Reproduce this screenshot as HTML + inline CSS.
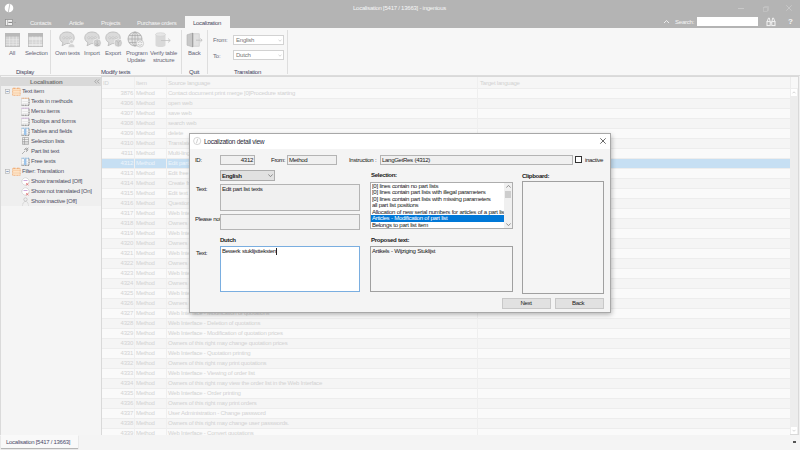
<!DOCTYPE html>
<html><head><meta charset="utf-8">
<style>
*{box-sizing:border-box;margin:0;padding:0}
html,body{width:800px;height:450px;overflow:hidden;background:#f0f0f0}
body{position:relative;font-family:"Liberation Sans",sans-serif;font-size:6px;letter-spacing:-0.22px;line-height:1;color:#333}
.a{position:absolute}
.t{position:absolute;white-space:pre;line-height:8px;height:8px}
svg{position:absolute;overflow:visible}
.b{font-weight:bold}
</style></head><body>

<div class="a" style="left:0px;top:0px;width:800px;height:28px;background:#b4b4b4"></div>
<svg style="left:4px;top:3px" width="10" height="10" viewBox="0 0 10 10"><circle cx="5" cy="5" r="4.3" fill="#fff"/><path d="M5.9 0.8 L4.3 9.2" stroke="#b4b4b4" stroke-width="0.8"/></svg>
<div class="t" style="left:353px;top:3.5px;color:#f6f6f6;letter-spacing:-0.25px">Localisation [5417 / 13663] - ingenious</div>
<div class="a" style="left:738px;top:8px;width:6px;height:1px;background:#c8c8c8"></div>
<svg style="left:763px;top:5.5px" width="7" height="6"><rect x="0.5" y="1.5" width="4" height="4" fill="none" stroke="#c8c8c8" stroke-width="0.6"/><path d="M1.5 1.5 V0.5 H5.5 V4.5 H4.5" fill="none" stroke="#c8c8c8" stroke-width="0.6"/></svg>
<svg style="left:786px;top:5px" width="6" height="6"><path d="M0.3 0.3 L5.7 5.7 M5.7 0.3 L0.3 5.7" stroke="#d0d0d0" stroke-width="0.7"/></svg>
<svg style="left:5px;top:19px" width="12" height="7"><rect x="0.5" y="0.5" width="7" height="6" fill="#f0f0f0" stroke="#8c8c8c" stroke-width="0.7"/><path d="M2.6 0.5 V6.5" stroke="#9a9a9a" stroke-width="0.6"/><path d="M3.4 3.4 H7" stroke="#707070" stroke-width="0.9"/><path d="M9.6 3.5 h1" stroke="#909090" stroke-width="0.6"/></svg>
<div class="t" style="left:30px;top:18.5px;color:#f4f4f4;letter-spacing:-0.3px">Contacts</div>
<div class="t" style="left:69px;top:18.5px;color:#f4f4f4;letter-spacing:-0.3px">Article</div>
<div class="t" style="left:101px;top:18.5px;color:#f4f4f4;letter-spacing:-0.3px">Projects</div>
<div class="t" style="left:137px;top:18.5px;color:#f4f4f4;letter-spacing:-0.3px">Purchase orders</div>
<div class="a" style="left:185px;top:16px;width:45px;height:12px;background:#f7f7f7"></div>
<div class="t" style="left:193px;top:18.5px;color:#4a4a60;letter-spacing:-0.3px">Localization</div>
<svg style="left:663px;top:19px" width="7" height="5"><path d="M1 4 L3.5 1.5 L6 4" fill="none" stroke="#f4f4f4" stroke-width="0.9"/></svg>
<div class="t" style="left:675px;top:17.5px;color:#f4f4f4;">Search:</div>
<div class="a" style="left:697px;top:17px;width:61px;height:9px;background:#fff"></div>
<svg style="left:766px;top:17px" width="10" height="10"><path d="M1.2 4.5 L2.5 1 H3.3 L4.1 4.5 M5.9 4.5 L6.7 1 H7.5 L8.8 4.5" fill="none" stroke="#f4f4f4" stroke-width="0.9"/><rect x="1" y="4.6" width="3.2" height="4" fill="none" stroke="#f4f4f4" stroke-width="1"/><rect x="5.8" y="4.6" width="3.2" height="4" fill="none" stroke="#f4f4f4" stroke-width="1"/><path d="M4.2 5.6 H5.8" stroke="#f4f4f4" stroke-width="0.8"/></svg>
<div class="t" style="left:788px;top:18px;color:#f4f4f4;font-size:8px;font-weight:bold">?</div>
<div class="a" style="left:0px;top:28px;width:800px;height:48px;background:#f7f7f7"></div>
<div class="a" style="left:0px;top:75px;width:800px;height:1px;background:#dcdcdc"></div>
<div class="a" style="left:50px;top:30px;width:1px;height:44px;background:#dedede"></div>
<div class="a" style="left:181px;top:30px;width:1px;height:44px;background:#dedede"></div>
<div class="a" style="left:207px;top:30px;width:1px;height:44px;background:#dedede"></div>
<div class="a" style="left:287px;top:30px;width:1px;height:44px;background:#dedede"></div>
<svg style="left:5px;top:33px" width="15" height="14" viewBox="0 0 15 14"><rect x="0.4" y="0.4" width="14.2" height="13.2" fill="#d2d2d2" stroke="#b8b8b8" stroke-width="0.8"/><rect x="0" y="0" width="15" height="3.6" fill="#b9b9b9"/><path d="M0.8 6.8 H14.2" stroke="#ececec" stroke-width="0.6"/><path d="M0.8 9.2 H14.2" stroke="#ececec" stroke-width="0.6"/><path d="M0.8 11.6 H14.2" stroke="#ececec" stroke-width="0.6"/><path d="M4.6 3.6 V13.2" stroke="#ececec" stroke-width="0.6"/><path d="M8 3.6 V13.2" stroke="#ececec" stroke-width="0.6"/><path d="M11.4 3.6 V13.2" stroke="#ececec" stroke-width="0.6"/></svg>
<svg style="left:28px;top:33px" width="15" height="14" viewBox="0 0 15 14"><rect x="0.4" y="0.4" width="14.2" height="13.2" fill="#d2d2d2" stroke="#b8b8b8" stroke-width="0.8"/><rect x="0" y="0" width="15" height="3.6" fill="#b9b9b9"/><rect x="0.8" y="4.2" width="13.4" height="2.4" fill="#e4e4e4"/><rect x="0.8" y="10.8" width="13.4" height="2.2" fill="#e4e4e4"/><path d="M0.8 6.8 H14.2" stroke="#ececec" stroke-width="0.6"/><path d="M0.8 9.2 H14.2" stroke="#ececec" stroke-width="0.6"/><path d="M0.8 11.6 H14.2" stroke="#ececec" stroke-width="0.6"/><path d="M4.6 3.6 V13.2" stroke="#ececec" stroke-width="0.6"/><path d="M8 3.6 V13.2" stroke="#ececec" stroke-width="0.6"/><path d="M11.4 3.6 V13.2" stroke="#ececec" stroke-width="0.6"/></svg>
<div class="t" style="left:9px;top:49px;color:#6a6a7a;">All</div>
<div class="t" style="left:25px;top:49px;color:#6a6a7a;">Selection</div>
<div class="t" style="left:16px;top:67.5px;color:#3c3c5a;">Display</div>
<svg style="left:59px;top:31px" width="18" height="17" viewBox="0 0 18 17"><path d="M8 1 C3.5 1 0.8 3.6 0.8 6.8 C0.8 9 2.2 10.8 4 11.6 L3 14.8 L7.2 12.6 C7.5 12.6 7.7 12.6 8 12.6 C12.5 12.6 15.2 10 15.2 6.8 C15.2 3.6 12.5 1 8 1 Z" fill="#dadada" stroke="#bcbcbc" stroke-width="0.9"/><circle cx="4.8" cy="6.8" r="1.1" fill="#e6e6e6" stroke="#b4b4b4" stroke-width="0.5"/><circle cx="8" cy="6.8" r="1.1" fill="#e6e6e6" stroke="#b4b4b4" stroke-width="0.5"/><circle cx="11.2" cy="6.8" r="1.1" fill="#e6e6e6" stroke="#b4b4b4" stroke-width="0.5"/><circle cx="12.5" cy="10.6" r="2" fill="#d2d2d2" stroke="#f7f7f7" stroke-width="0.7"/><path d="M9 16.6 C9.3 13.8 10.8 12.8 12.5 12.8 C14.2 12.8 15.7 13.8 16 16.6 Z" fill="#d2d2d2" stroke="#f7f7f7" stroke-width="0.7"/></svg>
<svg style="left:84px;top:31px" width="18" height="17" viewBox="0 0 18 17"><path d="M8 1 C3.5 1 0.8 3.6 0.8 6.8 C0.8 9 2.2 10.8 4 11.6 L3 14.8 L7.2 12.6 C7.5 12.6 7.7 12.6 8 12.6 C12.5 12.6 15.2 10 15.2 6.8 C15.2 3.6 12.5 1 8 1 Z" fill="#dadada" stroke="#bcbcbc" stroke-width="0.9"/><circle cx="4.8" cy="6.8" r="1.1" fill="#e6e6e6" stroke="#b4b4b4" stroke-width="0.5"/><circle cx="8" cy="6.8" r="1.1" fill="#e6e6e6" stroke="#b4b4b4" stroke-width="0.5"/><circle cx="11.2" cy="6.8" r="1.1" fill="#e6e6e6" stroke="#b4b4b4" stroke-width="0.5"/><circle cx="13.2" cy="12" r="4" fill="#d2d2d2" stroke="#f7f7f7" stroke-width="0.8"/><circle cx="13.2" cy="12" r="3.3" fill="none" stroke="#bdbdbd" stroke-width="0.5"/><path d="M13.2 9.6 V13.8 M11.7 12.4 L13.2 13.9 L14.7 12.4 M11.2 14.4 H15.2" fill="none" stroke="#a8a8a8" stroke-width="0.6"/></svg>
<svg style="left:105px;top:31px" width="18" height="17" viewBox="0 0 18 17"><path d="M8 1 C3.5 1 0.8 3.6 0.8 6.8 C0.8 9 2.2 10.8 4 11.6 L3 14.8 L7.2 12.6 C7.5 12.6 7.7 12.6 8 12.6 C12.5 12.6 15.2 10 15.2 6.8 C15.2 3.6 12.5 1 8 1 Z" fill="#dadada" stroke="#bcbcbc" stroke-width="0.9"/><circle cx="4.8" cy="6.8" r="1.1" fill="#e6e6e6" stroke="#b4b4b4" stroke-width="0.5"/><circle cx="8" cy="6.8" r="1.1" fill="#e6e6e6" stroke="#b4b4b4" stroke-width="0.5"/><circle cx="11.2" cy="6.8" r="1.1" fill="#e6e6e6" stroke="#b4b4b4" stroke-width="0.5"/><circle cx="13.2" cy="12" r="4" fill="#d2d2d2" stroke="#f7f7f7" stroke-width="0.8"/><circle cx="13.2" cy="12" r="3.3" fill="none" stroke="#bdbdbd" stroke-width="0.5"/><path d="M13.2 14.8 V11.6 M11.2 9.6 L13.2 11.6 L15.2 9.6" fill="none" stroke="#a8a8a8" stroke-width="0.6"/></svg>
<div class="t" style="left:55px;top:49px;color:#6a6a7a;">Own texts</div>
<div class="t" style="left:84px;top:49px;color:#6a6a7a;">Import</div>
<div class="t" style="left:105px;top:49px;color:#6a6a7a;">Export</div>
<svg style="left:127px;top:31px" width="18" height="17" viewBox="0 0 18 17"><circle cx="8" cy="8" r="7" fill="#e4e4e4" stroke="#a8a8a8" stroke-width="0.8"/><ellipse cx="8" cy="8" rx="3" ry="7" fill="none" stroke="#a8a8a8" stroke-width="0.7"/><path d="M1 8 H15 M2 4.5 H14 M2 11.5 H14 M8 1 V15" stroke="#a8a8a8" stroke-width="0.7"/><circle cx="13" cy="12.5" r="3.6" fill="#f2f2f2" stroke="#c0c0c0" stroke-width="0.7"/><path d="M11 12 A2.2 2.2 0 0 1 15 12 M15 13 A2.2 2.2 0 0 1 11 13" fill="none" stroke="#b0b0b0" stroke-width="0.6"/></svg>
<div class="t" style="left:126px;top:49px;color:#6a6a7a;">Program</div>
<div class="t" style="left:127px;top:55.5px;color:#6a6a7a;">Update</div>
<svg style="left:154px;top:32px" width="18" height="16" viewBox="0 0 18 16"><path d="M1.5 2.5 V13 C1.5 14.4 3.6 15 6.5 15 C9.4 15 11.5 14.4 11.5 13 V2.5 Z" fill="#d9d9d9"/><ellipse cx="6.5" cy="2.5" rx="5" ry="1.8" fill="#e6e6e6" stroke="#cfcfcf" stroke-width="0.6"/><path d="M7 8.5 H16 M14 6.5 L16.3 8.5 L14 10.5" fill="none" stroke="#c2c2c2" stroke-width="0.8"/></svg>
<div class="t" style="left:150px;top:49px;color:#6a6a7a;">Verify table</div>
<div class="t" style="left:153px;top:55.5px;color:#6a6a7a;">structure</div>
<div class="t" style="left:101px;top:67.5px;color:#3c3c5a;">Modify texts</div>
<svg style="left:186px;top:32px" width="18" height="16" viewBox="0 0 18 16"><path d="M1 2.8 L6.8 1 V15 L1 13.2 Z" fill="#c8c8c8" stroke="#b4b4b4" stroke-width="0.6"/><path d="M6.8 1 V15" stroke="#8c8c8c" stroke-width="0.9"/><rect x="7.4" y="1.8" width="5.8" height="12.4" fill="#e2e2e2" stroke="#c4c4c4" stroke-width="0.6"/><path d="M10 8.2 H16 M14.3 6.5 L16.2 8.2 L14.3 10" fill="none" stroke="#bcbcbc" stroke-width="0.8"/></svg>
<div class="t" style="left:188px;top:49px;color:#6a6a7a;">Back</div>
<div class="t" style="left:189px;top:67.5px;color:#3c3c5a;">Quit</div>
<div class="t" style="left:213px;top:35.5px;color:#6a6a7a;">From:</div>
<div class="t" style="left:213px;top:51.5px;color:#6a6a7a;">To:</div>
<div class="a" style="left:233px;top:35px;width:51px;height:10px;background:#fff;border:1px solid #d2d2d2"></div>
<div class="a" style="left:233px;top:50px;width:51px;height:10px;background:#fff;border:1px solid #d2d2d2"></div>
<div class="t" style="left:236px;top:35.5px;color:#777;">English</div>
<div class="t" style="left:236px;top:50.5px;color:#777;">Dutch</div>
<svg style="left:278px;top:39px" width="4" height="3"><path d="M0.5 0.8 L2 2.2 L3.5 0.8" fill="none" stroke="#bbb" stroke-width="0.6"/></svg>
<svg style="left:278px;top:54px" width="4" height="3"><path d="M0.5 0.8 L2 2.2 L3.5 0.8" fill="none" stroke="#bbb" stroke-width="0.6"/></svg>
<div class="t" style="left:234px;top:67.5px;color:#3c3c5a;">Translation</div>
<div class="a" style="left:0px;top:76px;width:101px;height:359px;background:#f5f5f5;border-left:1px solid #dadada"></div>
<div class="a" style="left:1px;top:86px;width:100px;height:120px;background:#efefef"></div>
<div class="a" style="left:1px;top:77px;width:100px;height:9px;background:#d9d9d9"></div>
<div class="t" style="left:30px;top:77.5px;color:#767676;font-weight:bold">Localisation</div>
<svg style="left:94px;top:79px" width="6" height="5"><path d="M2.6 0.5 L0.8 2.5 L2.6 4.5 M5.2 0.5 L3.4 2.5 L5.2 4.5" fill="none" stroke="#888" stroke-width="0.6"/></svg>
<svg style="left:5px;top:89px" width="5" height="5"><rect x="0.5" y="0.5" width="4" height="4" fill="#f4f4f4" stroke="#b0b0b0" stroke-width="0.6"/><path d="M1.3 2.5 H3.7" stroke="#6080b0" stroke-width="0.7"/></svg>
<svg style="left:12px;top:87px" width="9" height="9"><rect x="0.6" y="1.6" width="7.6" height="6.8" fill="#fde4c8" stroke="#f0a060" stroke-width="0.7" stroke-dasharray="1 0.5"/><path d="M1 1.2 H3.5 M5 1.2 H7.5" stroke="#f0a060" stroke-width="0.7"/><path d="M0.6 3.5 H8.2 M0.6 6 H8.2" stroke="#f6c090" stroke-width="0.5"/></svg>
<div class="t" style="left:22px;top:87px;color:#505064;">Text item</div>
<svg style="left:21px;top:97px" width="9" height="9"><rect x="0.6" y="1.8" width="7.4" height="6.4" fill="#f8f8f8" stroke="#c8c8c8" stroke-width="0.5"/><path d="M0.6 1.2 H8" stroke="#f0a060" stroke-width="1" stroke-dasharray="1 0.6"/><path d="M8 1.8 V8.2 H0.6" fill="none" stroke="#505050" stroke-width="0.8" stroke-dasharray="0.9 0.7"/><path d="M1.5 4.5 H7 M1.5 6.5 H7" stroke="#d8d8d8" stroke-width="0.5"/></svg>
<div class="t" style="left:31px;top:97px;color:#505064;">Texts in methods</div>
<svg style="left:21px;top:107px" width="9" height="9"><rect x="0.6" y="1.8" width="7.4" height="6.4" fill="#f8f8f8" stroke="#c8c8c8" stroke-width="0.5"/><path d="M0.6 1.2 H8" stroke="#c8a0d8" stroke-width="1" stroke-dasharray="1 0.6"/><path d="M8 1.8 V8.2 H0.6" fill="none" stroke="#505050" stroke-width="0.8" stroke-dasharray="0.9 0.7"/><path d="M1.5 4.5 H7 M1.5 6.5 H7" stroke="#d8d8d8" stroke-width="0.5"/></svg>
<div class="t" style="left:31px;top:107px;color:#505064;">Menu items</div>
<svg style="left:21px;top:117px" width="9" height="9"><rect x="0.6" y="1.8" width="7.4" height="6.4" fill="#f8f8f8" stroke="#c8c8c8" stroke-width="0.5"/><path d="M0.6 1.2 H8" stroke="#c8a0d8" stroke-width="1" stroke-dasharray="1 0.6"/><path d="M8 1.8 V8.2 H0.6" fill="none" stroke="#505050" stroke-width="0.8" stroke-dasharray="0.9 0.7"/><path d="M1.5 4.5 H7 M1.5 6.5 H7" stroke="#d8d8d8" stroke-width="0.5"/></svg>
<div class="t" style="left:31px;top:117px;color:#505064;">Tooltips and forms</div>
<svg style="left:21px;top:127px" width="9" height="9"><rect x="0.6" y="1.8" width="7.4" height="6.4" fill="#f8f8f8" stroke="#c8c8c8" stroke-width="0.5"/><path d="M0.6 1.2 H8" stroke="#7ab0e0" stroke-width="1" stroke-dasharray="1 0.6"/><path d="M8 1.8 V8.2 H0.6" fill="none" stroke="#505050" stroke-width="0.8" stroke-dasharray="0.9 0.7"/><path d="M1.5 4.5 H7 M1.5 6.5 H7" stroke="#d8d8d8" stroke-width="0.5"/><rect x="3" y="2" width="2.4" height="6" fill="#9cc4ea"/></svg>
<div class="t" style="left:31px;top:127px;color:#505064;">Tables and fields</div>
<svg style="left:22px;top:137px" width="8" height="8"><path d="M0.5 0.5 H6.5 V7.5 H0.5 Z M0.5 2.5 H6.5 M0.5 4.5 H6.5 M0.5 6 H6.5 M2.5 0.5 V7.5" fill="none" stroke="#8a8a8a" stroke-width="0.5"/></svg>
<div class="t" style="left:31px;top:137px;color:#505064;">Selection lists</div>
<svg style="left:21px;top:147px" width="9" height="8"><path d="M1 7 L4 4 M3 3 A1.5 1.5 0 1 1 5 5 M5 3 L7.5 0.7 M6 4 A1.5 1.5 0 1 0 4 2" fill="none" stroke="#8a8a8a" stroke-width="0.6"/></svg>
<div class="t" style="left:31px;top:147px;color:#505064;">Part list text</div>
<svg style="left:21px;top:157px" width="9" height="9"><rect x="0.6" y="1.8" width="7.4" height="6.4" fill="#f8f8f8" stroke="#c8c8c8" stroke-width="0.5"/><path d="M0.6 1.2 H8" stroke="#7ab0e0" stroke-width="1" stroke-dasharray="1 0.6"/><path d="M8 1.8 V8.2 H0.6" fill="none" stroke="#505050" stroke-width="0.8" stroke-dasharray="0.9 0.7"/><path d="M1.5 4.5 H7 M1.5 6.5 H7" stroke="#d8d8d8" stroke-width="0.5"/><rect x="3" y="2" width="2.4" height="6" fill="#9cc4ea"/></svg>
<div class="t" style="left:31px;top:157px;color:#505064;">Free texts</div>
<svg style="left:5px;top:169px" width="5" height="5"><rect x="0.5" y="0.5" width="4" height="4" fill="#f4f4f4" stroke="#b0b0b0" stroke-width="0.6"/><path d="M1.3 2.5 H3.7" stroke="#6080b0" stroke-width="0.7"/></svg>
<svg style="left:12px;top:167px" width="9" height="9"><rect x="0.6" y="1.6" width="7.6" height="6.8" fill="#fde4c8" stroke="#f0a060" stroke-width="0.7" stroke-dasharray="1 0.5"/><path d="M1 1.2 H3.5 M5 1.2 H7.5" stroke="#f0a060" stroke-width="0.7"/><path d="M0.6 3.5 H8.2 M0.6 6 H8.2" stroke="#f6c090" stroke-width="0.5"/></svg>
<div class="t" style="left:22px;top:167px;color:#505064;">Filter: Translation</div>
<svg style="left:21px;top:177px" width="9" height="9"><circle cx="4.5" cy="4.5" r="3.6" fill="#fff" stroke="#999" stroke-width="0.5" stroke-dasharray="0.8 0.5"/><path d="M2.5 3.5 H6.5" stroke="#c8a0d8" stroke-width="0.9"/><path d="M5 6 L7.5 8.3 M7.5 6 L5 8.3" stroke="#e05050" stroke-width="0.6"/></svg>
<div class="t" style="left:31px;top:177px;color:#505064;">Show translated [Off]</div>
<svg style="left:21px;top:187px" width="9" height="9"><circle cx="4.5" cy="4.5" r="3.6" fill="#fff" stroke="#999" stroke-width="0.5" stroke-dasharray="0.8 0.5"/><path d="M2.5 3.5 H6.5" stroke="#c8a0d8" stroke-width="0.9"/><path d="M5 6 L7.5 8.3 M7.5 6 L5 8.3" stroke="#e05050" stroke-width="0.6"/></svg>
<div class="t" style="left:31px;top:187px;color:#505064;">Show not translated [On]</div>
<svg style="left:21px;top:197px" width="9" height="9"><circle cx="4.5" cy="2.5" r="1.7" fill="none" stroke="#aaa" stroke-width="0.5"/><path d="M1.5 8.5 C2 5.5 3 4.5 4.5 4.5 C6 4.5 7 5.5 7.5 8.5" fill="none" stroke="#aaa" stroke-width="0.5" stroke-dasharray="0.8 0.5"/></svg>
<div class="t" style="left:31px;top:197px;color:#505064;">Show inactive [Off]</div>
<div class="a" style="left:101px;top:76px;width:698px;height:359px;background:#f8f8f8;border:1px solid #d9d9d9"></div>
<div class="a" style="left:102px;top:77px;width:688px;height:11px;background:#f6f6f6"></div>
<div class="t" style="left:103px;top:79px;color:#d2d2d2;">ID</div>
<div class="t" style="left:136px;top:79px;color:#d2d2d2;">Item</div>
<div class="t" style="left:168px;top:79px;color:#d2d2d2;">Source language</div>
<div class="t" style="left:480px;top:79px;color:#d2d2d2;">Target language</div>
<div class="a" style="left:102px;top:88px;width:688px;height:10px;background:#fafafa"></div>
<div class="a" style="left:102px;top:88px;width:688px;height:1px;background:#ededed"></div>
<div class="t" style="left:112px;top:88.8px;width:21px;text-align:right;color:#d2d2d2">3876</div>
<div class="t" style="left:136px;top:88.8px;color:#d2d2d2">Method</div>
<div class="t" style="left:168px;top:88.8px;color:#d2d2d2">Contact document print merge [0]Procedure starting</div>
<div class="a" style="left:102px;top:98px;width:688px;height:10px;background:#f5f5f5"></div>
<div class="a" style="left:102px;top:98px;width:688px;height:1px;background:#ededed"></div>
<div class="t" style="left:112px;top:98.8px;width:21px;text-align:right;color:#d2d2d2">4306</div>
<div class="t" style="left:136px;top:98.8px;color:#d2d2d2">Method</div>
<div class="t" style="left:168px;top:98.8px;color:#d2d2d2">open web</div>
<div class="a" style="left:102px;top:108px;width:688px;height:10px;background:#fafafa"></div>
<div class="a" style="left:102px;top:108px;width:688px;height:1px;background:#ededed"></div>
<div class="t" style="left:112px;top:108.8px;width:21px;text-align:right;color:#d2d2d2">4307</div>
<div class="t" style="left:136px;top:108.8px;color:#d2d2d2">Method</div>
<div class="t" style="left:168px;top:108.8px;color:#d2d2d2">save web</div>
<div class="a" style="left:102px;top:118px;width:688px;height:10px;background:#f5f5f5"></div>
<div class="a" style="left:102px;top:118px;width:688px;height:1px;background:#ededed"></div>
<div class="t" style="left:112px;top:118.8px;width:21px;text-align:right;color:#d2d2d2">4308</div>
<div class="t" style="left:136px;top:118.8px;color:#d2d2d2">Method</div>
<div class="t" style="left:168px;top:118.8px;color:#d2d2d2">search web</div>
<div class="a" style="left:102px;top:128px;width:688px;height:10px;background:#fafafa"></div>
<div class="a" style="left:102px;top:128px;width:688px;height:1px;background:#ededed"></div>
<div class="t" style="left:112px;top:128.8px;width:21px;text-align:right;color:#d2d2d2">4309</div>
<div class="t" style="left:136px;top:128.8px;color:#d2d2d2">Method</div>
<div class="t" style="left:168px;top:128.8px;color:#d2d2d2">delete</div>
<div class="a" style="left:102px;top:138px;width:688px;height:10px;background:#f5f5f5"></div>
<div class="a" style="left:102px;top:138px;width:688px;height:1px;background:#ededed"></div>
<div class="t" style="left:112px;top:138.8px;width:21px;text-align:right;color:#d2d2d2">4310</div>
<div class="t" style="left:136px;top:138.8px;color:#d2d2d2">Method</div>
<div class="t" style="left:168px;top:138.8px;color:#d2d2d2">Translate</div>
<div class="a" style="left:102px;top:148px;width:688px;height:10px;background:#fafafa"></div>
<div class="a" style="left:102px;top:148px;width:688px;height:1px;background:#ededed"></div>
<div class="t" style="left:112px;top:148.8px;width:21px;text-align:right;color:#d2d2d2">4311</div>
<div class="t" style="left:136px;top:148.8px;color:#d2d2d2">Method</div>
<div class="t" style="left:168px;top:148.8px;color:#d2d2d2">Multi-lingual</div>
<div class="a" style="left:102px;top:158px;width:688px;height:10px;background:#c6dff3"></div>
<div class="a" style="left:102px;top:158px;width:688px;height:1px;background:#ededed"></div>
<div class="t" style="left:112px;top:158.8px;width:21px;text-align:right;color:#eef5fb">4312</div>
<div class="t" style="left:136px;top:158.8px;color:#eef5fb">Method</div>
<div class="t" style="left:168px;top:158.8px;color:#eef5fb">Edit part list texts</div>
<div class="a" style="left:102px;top:168px;width:688px;height:10px;background:#fafafa"></div>
<div class="a" style="left:102px;top:168px;width:688px;height:1px;background:#ededed"></div>
<div class="t" style="left:112px;top:168.8px;width:21px;text-align:right;color:#d2d2d2">4313</div>
<div class="t" style="left:136px;top:168.8px;color:#d2d2d2">Method</div>
<div class="t" style="left:168px;top:168.8px;color:#d2d2d2">Edit free texts</div>
<div class="a" style="left:102px;top:178px;width:688px;height:10px;background:#f5f5f5"></div>
<div class="a" style="left:102px;top:178px;width:688px;height:1px;background:#ededed"></div>
<div class="t" style="left:112px;top:178.8px;width:21px;text-align:right;color:#d2d2d2">4314</div>
<div class="t" style="left:136px;top:178.8px;color:#d2d2d2">Method</div>
<div class="t" style="left:168px;top:178.8px;color:#d2d2d2">Create free</div>
<div class="a" style="left:102px;top:188px;width:688px;height:10px;background:#fafafa"></div>
<div class="a" style="left:102px;top:188px;width:688px;height:1px;background:#ededed"></div>
<div class="t" style="left:112px;top:188.8px;width:21px;text-align:right;color:#d2d2d2">4315</div>
<div class="t" style="left:136px;top:188.8px;color:#d2d2d2">Method</div>
<div class="t" style="left:168px;top:188.8px;color:#d2d2d2">Edit text</div>
<div class="a" style="left:102px;top:198px;width:688px;height:10px;background:#f5f5f5"></div>
<div class="a" style="left:102px;top:198px;width:688px;height:1px;background:#ededed"></div>
<div class="t" style="left:112px;top:198.8px;width:21px;text-align:right;color:#d2d2d2">4316</div>
<div class="t" style="left:136px;top:198.8px;color:#d2d2d2">Method</div>
<div class="t" style="left:168px;top:198.8px;color:#d2d2d2">Question</div>
<div class="a" style="left:102px;top:208px;width:688px;height:10px;background:#fafafa"></div>
<div class="a" style="left:102px;top:208px;width:688px;height:1px;background:#ededed"></div>
<div class="t" style="left:112px;top:208.8px;width:21px;text-align:right;color:#d2d2d2">4317</div>
<div class="t" style="left:136px;top:208.8px;color:#d2d2d2">Method</div>
<div class="t" style="left:168px;top:208.8px;color:#d2d2d2">Web Interface</div>
<div class="a" style="left:102px;top:218px;width:688px;height:10px;background:#f5f5f5"></div>
<div class="a" style="left:102px;top:218px;width:688px;height:1px;background:#ededed"></div>
<div class="t" style="left:112px;top:218.8px;width:21px;text-align:right;color:#d2d2d2">4318</div>
<div class="t" style="left:136px;top:218.8px;color:#d2d2d2">Method</div>
<div class="t" style="left:168px;top:218.8px;color:#d2d2d2">Owners of</div>
<div class="a" style="left:102px;top:228px;width:688px;height:10px;background:#fafafa"></div>
<div class="a" style="left:102px;top:228px;width:688px;height:1px;background:#ededed"></div>
<div class="t" style="left:112px;top:228.8px;width:21px;text-align:right;color:#d2d2d2">4319</div>
<div class="t" style="left:136px;top:228.8px;color:#d2d2d2">Method</div>
<div class="t" style="left:168px;top:228.8px;color:#d2d2d2">Web Interface</div>
<div class="a" style="left:102px;top:238px;width:688px;height:10px;background:#f5f5f5"></div>
<div class="a" style="left:102px;top:238px;width:688px;height:1px;background:#ededed"></div>
<div class="t" style="left:112px;top:238.8px;width:21px;text-align:right;color:#d2d2d2">4320</div>
<div class="t" style="left:136px;top:238.8px;color:#d2d2d2">Method</div>
<div class="t" style="left:168px;top:238.8px;color:#d2d2d2">Owners of</div>
<div class="a" style="left:102px;top:248px;width:688px;height:10px;background:#fafafa"></div>
<div class="a" style="left:102px;top:248px;width:688px;height:1px;background:#ededed"></div>
<div class="t" style="left:112px;top:248.8px;width:21px;text-align:right;color:#d2d2d2">4321</div>
<div class="t" style="left:136px;top:248.8px;color:#d2d2d2">Method</div>
<div class="t" style="left:168px;top:248.8px;color:#d2d2d2">Web Interface</div>
<div class="a" style="left:102px;top:258px;width:688px;height:10px;background:#f5f5f5"></div>
<div class="a" style="left:102px;top:258px;width:688px;height:1px;background:#ededed"></div>
<div class="t" style="left:112px;top:258.8px;width:21px;text-align:right;color:#d2d2d2">4322</div>
<div class="t" style="left:136px;top:258.8px;color:#d2d2d2">Method</div>
<div class="t" style="left:168px;top:258.8px;color:#d2d2d2">Owners of</div>
<div class="a" style="left:102px;top:268px;width:688px;height:10px;background:#fafafa"></div>
<div class="a" style="left:102px;top:268px;width:688px;height:1px;background:#ededed"></div>
<div class="t" style="left:112px;top:268.8px;width:21px;text-align:right;color:#d2d2d2">4323</div>
<div class="t" style="left:136px;top:268.8px;color:#d2d2d2">Method</div>
<div class="t" style="left:168px;top:268.8px;color:#d2d2d2">Web Interface</div>
<div class="a" style="left:102px;top:278px;width:688px;height:10px;background:#f5f5f5"></div>
<div class="a" style="left:102px;top:278px;width:688px;height:1px;background:#ededed"></div>
<div class="t" style="left:112px;top:278.8px;width:21px;text-align:right;color:#d2d2d2">4324</div>
<div class="t" style="left:136px;top:278.8px;color:#d2d2d2">Method</div>
<div class="t" style="left:168px;top:278.8px;color:#d2d2d2">Owners of</div>
<div class="a" style="left:102px;top:288px;width:688px;height:10px;background:#fafafa"></div>
<div class="a" style="left:102px;top:288px;width:688px;height:1px;background:#ededed"></div>
<div class="t" style="left:112px;top:288.8px;width:21px;text-align:right;color:#d2d2d2">4325</div>
<div class="t" style="left:136px;top:288.8px;color:#d2d2d2">Method</div>
<div class="t" style="left:168px;top:288.8px;color:#d2d2d2">Web Interface</div>
<div class="a" style="left:102px;top:298px;width:688px;height:10px;background:#f5f5f5"></div>
<div class="a" style="left:102px;top:298px;width:688px;height:1px;background:#ededed"></div>
<div class="t" style="left:112px;top:298.8px;width:21px;text-align:right;color:#d2d2d2">4326</div>
<div class="t" style="left:136px;top:298.8px;color:#d2d2d2">Method</div>
<div class="t" style="left:168px;top:298.8px;color:#d2d2d2">Owners of</div>
<div class="a" style="left:102px;top:308px;width:688px;height:10px;background:#fafafa"></div>
<div class="a" style="left:102px;top:308px;width:688px;height:1px;background:#ededed"></div>
<div class="t" style="left:112px;top:308.8px;width:21px;text-align:right;color:#d2d2d2">4327</div>
<div class="t" style="left:136px;top:308.8px;color:#d2d2d2">Method</div>
<div class="t" style="left:168px;top:308.8px;color:#d2d2d2">Web Interface - Modification of quotations</div>
<div class="a" style="left:102px;top:318px;width:688px;height:10px;background:#f5f5f5"></div>
<div class="a" style="left:102px;top:318px;width:688px;height:1px;background:#ededed"></div>
<div class="t" style="left:112px;top:318.8px;width:21px;text-align:right;color:#d2d2d2">4328</div>
<div class="t" style="left:136px;top:318.8px;color:#d2d2d2">Method</div>
<div class="t" style="left:168px;top:318.8px;color:#d2d2d2">Web Interface - Deletion of quotations</div>
<div class="a" style="left:102px;top:328px;width:688px;height:10px;background:#fafafa"></div>
<div class="a" style="left:102px;top:328px;width:688px;height:1px;background:#ededed"></div>
<div class="t" style="left:112px;top:328.8px;width:21px;text-align:right;color:#d2d2d2">4329</div>
<div class="t" style="left:136px;top:328.8px;color:#d2d2d2">Method</div>
<div class="t" style="left:168px;top:328.8px;color:#d2d2d2">Web Interface - Modification of quotation prices</div>
<div class="a" style="left:102px;top:338px;width:688px;height:10px;background:#f5f5f5"></div>
<div class="a" style="left:102px;top:338px;width:688px;height:1px;background:#ededed"></div>
<div class="t" style="left:112px;top:338.8px;width:21px;text-align:right;color:#d2d2d2">4330</div>
<div class="t" style="left:136px;top:338.8px;color:#d2d2d2">Method</div>
<div class="t" style="left:168px;top:338.8px;color:#d2d2d2">Owners of this right may change quotation prices</div>
<div class="a" style="left:102px;top:348px;width:688px;height:10px;background:#fafafa"></div>
<div class="a" style="left:102px;top:348px;width:688px;height:1px;background:#ededed"></div>
<div class="t" style="left:112px;top:348.8px;width:21px;text-align:right;color:#d2d2d2">4331</div>
<div class="t" style="left:136px;top:348.8px;color:#d2d2d2">Method</div>
<div class="t" style="left:168px;top:348.8px;color:#d2d2d2">Web Interface - Quotation printing</div>
<div class="a" style="left:102px;top:358px;width:688px;height:10px;background:#f5f5f5"></div>
<div class="a" style="left:102px;top:358px;width:688px;height:1px;background:#ededed"></div>
<div class="t" style="left:112px;top:358.8px;width:21px;text-align:right;color:#d2d2d2">4332</div>
<div class="t" style="left:136px;top:358.8px;color:#d2d2d2">Method</div>
<div class="t" style="left:168px;top:358.8px;color:#d2d2d2">Owners of this right may print quotations</div>
<div class="a" style="left:102px;top:368px;width:688px;height:10px;background:#fafafa"></div>
<div class="a" style="left:102px;top:368px;width:688px;height:1px;background:#ededed"></div>
<div class="t" style="left:112px;top:368.8px;width:21px;text-align:right;color:#d2d2d2">4333</div>
<div class="t" style="left:136px;top:368.8px;color:#d2d2d2">Method</div>
<div class="t" style="left:168px;top:368.8px;color:#d2d2d2">Web Interface - Viewing of order list</div>
<div class="a" style="left:102px;top:378px;width:688px;height:10px;background:#f5f5f5"></div>
<div class="a" style="left:102px;top:378px;width:688px;height:1px;background:#ededed"></div>
<div class="t" style="left:112px;top:378.8px;width:21px;text-align:right;color:#d2d2d2">4334</div>
<div class="t" style="left:136px;top:378.8px;color:#d2d2d2">Method</div>
<div class="t" style="left:168px;top:378.8px;color:#d2d2d2">Owners of this right may view the order list in the Web Interface</div>
<div class="a" style="left:102px;top:388px;width:688px;height:10px;background:#fafafa"></div>
<div class="a" style="left:102px;top:388px;width:688px;height:1px;background:#ededed"></div>
<div class="t" style="left:112px;top:388.8px;width:21px;text-align:right;color:#d2d2d2">4335</div>
<div class="t" style="left:136px;top:388.8px;color:#d2d2d2">Method</div>
<div class="t" style="left:168px;top:388.8px;color:#d2d2d2">Web Interface - Order printing</div>
<div class="a" style="left:102px;top:398px;width:688px;height:10px;background:#f5f5f5"></div>
<div class="a" style="left:102px;top:398px;width:688px;height:1px;background:#ededed"></div>
<div class="t" style="left:112px;top:398.8px;width:21px;text-align:right;color:#d2d2d2">4336</div>
<div class="t" style="left:136px;top:398.8px;color:#d2d2d2">Method</div>
<div class="t" style="left:168px;top:398.8px;color:#d2d2d2">Owners of this right may print orders</div>
<div class="a" style="left:102px;top:408px;width:688px;height:10px;background:#fafafa"></div>
<div class="a" style="left:102px;top:408px;width:688px;height:1px;background:#ededed"></div>
<div class="t" style="left:112px;top:408.8px;width:21px;text-align:right;color:#d2d2d2">4337</div>
<div class="t" style="left:136px;top:408.8px;color:#d2d2d2">Method</div>
<div class="t" style="left:168px;top:408.8px;color:#d2d2d2">User Administration - Change password</div>
<div class="a" style="left:102px;top:418px;width:688px;height:10px;background:#f5f5f5"></div>
<div class="a" style="left:102px;top:418px;width:688px;height:1px;background:#ededed"></div>
<div class="t" style="left:112px;top:418.8px;width:21px;text-align:right;color:#d2d2d2">4338</div>
<div class="t" style="left:136px;top:418.8px;color:#d2d2d2">Method</div>
<div class="t" style="left:168px;top:418.8px;color:#d2d2d2">Owners of this right may change user passwords.</div>
<div class="a" style="left:102px;top:428px;width:688px;height:7px;background:#fafafa"></div>
<div class="a" style="left:102px;top:428px;width:688px;height:1px;background:#ededed"></div>
<div class="t" style="left:112px;top:428.8px;width:21px;text-align:right;color:#d2d2d2">4339</div>
<div class="t" style="left:136px;top:428.8px;color:#d2d2d2">Method</div>
<div class="t" style="left:168px;top:428.8px;color:#d2d2d2">Web Interface - Convert quotations</div>
<div class="a" style="left:134px;top:77px;width:1px;height:358px;background:#efefef"></div>
<div class="a" style="left:166px;top:77px;width:1px;height:358px;background:#efefef"></div>
<div class="a" style="left:477px;top:77px;width:1px;height:358px;background:#efefef"></div>
<div class="a" style="left:790px;top:77px;width:1px;height:11px;background:#ececec"></div>
<div class="a" style="left:790px;top:88px;width:8px;height:346px;background:#ededed"></div>
<div class="a" style="left:791px;top:89px;width:6px;height:7px;background:#fff"></div>
<div class="a" style="left:791px;top:427px;width:6px;height:7px;background:#fff"></div>
<svg style="left:792px;top:91px" width="4" height="3"><path d="M0.5 2.3 L2 0.8 L3.5 2.3" fill="none" stroke="#aaa" stroke-width="0.5"/></svg>
<svg style="left:792px;top:429px" width="4" height="3"><path d="M0.5 0.8 L2 2.3 L3.5 0.8" fill="none" stroke="#aaa" stroke-width="0.5"/></svg>
<div class="a" style="left:0px;top:435px;width:800px;height:15px;background:#f4f4f4"></div>
<div class="a" style="left:1px;top:435px;width:77px;height:13px;background:#f9f9f9;box-shadow:0 1px 1px rgba(0,0,0,0.25)"></div>
<div class="t" style="left:6px;top:438px;color:#4a4a6a;letter-spacing:-0.28px">Localisation [5417 / 13663]</div>
<div class="a" style="left:793px;top:441px;width:3px;height:1.5px;background:#555"></div>
<div style="font-size:6.1px;letter-spacing:-0.34px;word-spacing:0.3px">
<div class="a" style="left:189px;top:133px;width:422px;height:180px;background:#f4f4f4;border:1px solid #a8a8a8;box-shadow:0.5px 1.5px 5px rgba(0,0,0,0.3)"></div>
<div class="a" style="left:190px;top:134px;width:420px;height:15px;background:#fff"></div>
<svg style="left:193px;top:137px" width="9" height="8"><circle cx="4.2" cy="4" r="3.6" fill="none" stroke="#bbb" stroke-width="0.6"/><path d="M4.8 1.8 L3.4 6.3" stroke="#bbb" stroke-width="0.7"/></svg>
<div class="t" style="left:204px;top:137.5px;color:#2a2a3a;font-size:6.6px;letter-spacing:-0.3px;word-spacing:0">Localization detail view</div>
<svg style="left:600px;top:138px" width="6" height="6"><path d="M0.3 0.3 L5.7 5.7 M5.7 0.3 L0.3 5.7" stroke="#444" stroke-width="0.8"/></svg>
<div class="t" style="left:195px;top:155.5px;color:#1a1a1a;">ID:</div>
<div class="a" style="left:220px;top:155px;width:35px;height:10px;background:#f0f0f0;border:1px solid #b4b4b4"></div>
<div class="t" style="left:222px;top:155.5px;width:31px;text-align:right;color:#1a1a1a">4312</div>
<div class="t" style="left:271px;top:155.5px;color:#1a1a1a;">From:</div>
<div class="a" style="left:287px;top:155px;width:50px;height:10px;background:#f0f0f0;border:1px solid #b4b4b4"></div>
<div class="t" style="left:289px;top:155.5px;color:#1a1a1a;">Method</div>
<div class="t" style="left:349px;top:155.5px;color:#1a1a1a;">Instruction :</div>
<div class="a" style="left:380px;top:155px;width:193px;height:10px;background:#f0f0f0;border:1px solid #b4b4b4"></div>
<div class="t" style="left:382px;top:155.5px;color:#1a1a1a;">LangGetRes (4312)</div>
<div class="a" style="left:575px;top:156px;width:7px;height:7px;background:#fff;border:1px solid #333"></div>
<div class="t" style="left:585px;top:155.5px;color:#1a1a1a;">inactive</div>
<div class="a" style="left:220px;top:170px;width:55px;height:11px;background:#e1e1e1;border:1px solid #adadad"></div>
<div class="t" style="left:222px;top:171.5px;color:#1a1a1a;font-weight:bold">English</div>
<svg style="left:268px;top:174px" width="5" height="3"><path d="M0.3 0.5 L2.5 2.5 L4.7 0.5" fill="none" stroke="#555" stroke-width="0.6"/></svg>
<div class="t" style="left:196px;top:184.5px;color:#1a1a1a;">Text:</div>
<div class="a" style="left:220px;top:184px;width:140px;height:27px;background:#f0f0f0;border:1px solid #b4b4b4"></div>
<div class="t" style="left:222px;top:184.5px;color:#1a1a1a;">Edit part list texts</div>
<div class="t" style="left:195px;top:214.5px;color:#1a1a1a;">Please not</div>
<div class="a" style="left:220px;top:214px;width:140px;height:16px;background:#f0f0f0;border:1px solid #b4b4b4"></div>
<div class="t" style="left:220px;top:235.5px;color:#1a1a1a;font-weight:bold">Dutch</div>
<div class="t" style="left:196px;top:248.5px;color:#1a1a1a;">Text:</div>
<div class="a" style="left:220px;top:246px;width:140px;height:46px;background:#fff;border:1px solid #7aaee0"></div>
<div class="t" style="left:222px;top:246.5px;color:#1a1a1a;">Bewerk stuklijstteksten</div>
<div class="a" style="left:276px;top:247.5px;width:0.7px;height:7.5px;background:#222"></div>
<div class="t" style="left:371px;top:170.5px;color:#1a1a1a;font-weight:bold">Selection:</div>
<div class="a" style="left:370px;top:182px;width:143px;height:47px;background:#fff;border:1px solid #adadad"></div>
<div class="t" style="left:372px;top:181.5px;width:132px;overflow:hidden;color:#1a1a1a">[0] lines contain no part lists</div>
<div class="t" style="left:372px;top:188.0px;width:132px;overflow:hidden;color:#1a1a1a">[0] lines contain part lists with illegal parameters</div>
<div class="t" style="left:372px;top:194.5px;width:132px;overflow:hidden;color:#1a1a1a">[0] lines contain part lists with missing parameters</div>
<div class="t" style="left:372px;top:201.0px;width:132px;overflow:hidden;color:#1a1a1a">all part list positions</div>
<div class="t" style="left:372px;top:207.5px;width:132px;overflow:hidden;color:#1a1a1a">Allocation of new serial numbers for articles of a part list h</div>
<div class="a" style="left:371px;top:215px;width:133px;height:6.5px;background:#0078d7"></div>
<div class="t" style="left:372px;top:214.0px;width:132px;overflow:hidden;color:#fff">Articles - Modification of part list</div>
<div class="t" style="left:372px;top:220.5px;width:132px;overflow:hidden;color:#1a1a1a">Belongs to part list item</div>
<div class="a" style="left:504px;top:183px;width:8px;height:45px;background:#f0f0f0"></div>
<div class="a" style="left:505px;top:191px;width:6px;height:7px;background:#cdcdcd"></div>
<svg style="left:506px;top:185px" width="5" height="3"><path d="M0.3 2.5 L2.5 0.5 L4.7 2.5" fill="none" stroke="#555" stroke-width="0.6"/></svg>
<svg style="left:506px;top:223px" width="5" height="3"><path d="M0.3 0.5 L2.5 2.5 L4.7 0.5" fill="none" stroke="#555" stroke-width="0.6"/></svg>
<div class="t" style="left:371px;top:235.5px;color:#1a1a1a;font-weight:bold">Proposed text:</div>
<div class="a" style="left:370px;top:246px;width:143px;height:46px;background:#f5f5f5;border:1px solid #a0a0a0"></div>
<div class="t" style="left:372px;top:246.5px;color:#1a1a1a;">Artikels - Wijziging Stuklijst</div>
<div class="t" style="left:522px;top:171.5px;color:#1a1a1a;font-weight:bold">Clipboard:</div>
<div class="a" style="left:522px;top:181px;width:82px;height:113px;background:#f5f5f5;border:1px solid #a0a0a0"></div>
<div class="a" style="left:502px;top:298px;width:49px;height:11px;background:#e1e1e1;border:1px solid #c8c8c8"></div>
<div class="t" style="left:520.5px;top:299px;color:#1a1a1a;">Next</div>
<div class="a" style="left:555px;top:298px;width:49px;height:11px;background:#e1e1e1;border:1px solid #c8c8c8"></div>
<div class="t" style="left:572px;top:299px;color:#1a1a1a;">Back</div>
</div>
</body></html>
